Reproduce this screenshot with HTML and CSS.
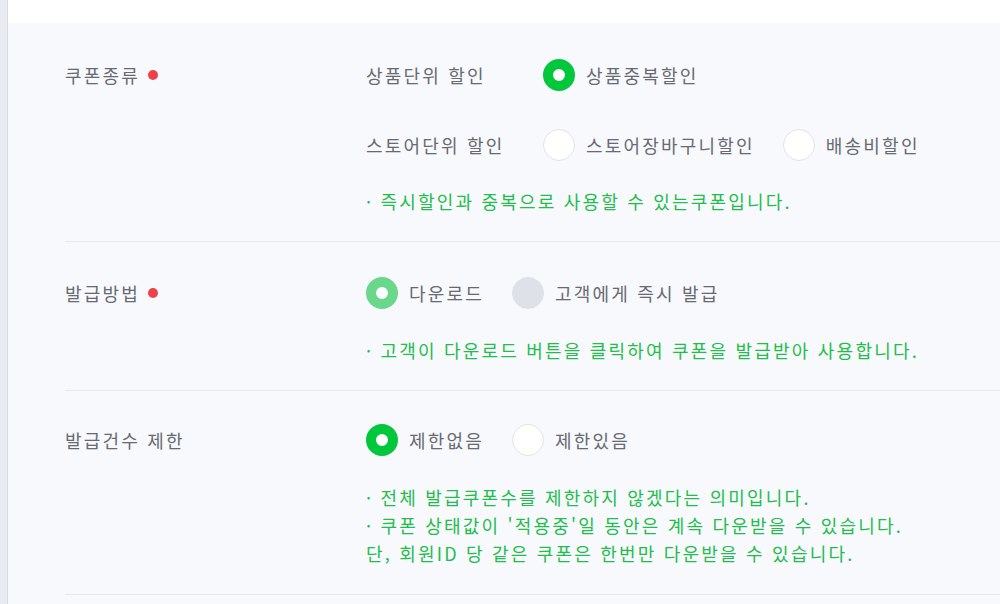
FILE: index.html
```html
<!DOCTYPE html>
<html lang="ko">
<head>
<meta charset="utf-8">
<link rel="stylesheet" href="styles.css">
</head>
<body>
<div class="app">
  <div class="edge"></div>
  <div class="main">
    <div class="topbar"></div>
    <div class="content">
      <div class="section s1">
        <div class="label">쿠폰종류<span class="req"></span></div>
        <div class="body">
          <div class="row">
            <span class="group">상품단위 할인</span>
            <label class="opt"><span class="radio on"></span><span class="txt">상품중복할인</span></label>
          </div>
          <div class="row row2">
            <span class="group">스토어단위 할인</span>
            <label class="opt"><span class="radio"></span><span class="txt">스토어장바구니할인</span></label>
            <label class="opt"><span class="radio"></span><span class="txt">배송비할인</span></label>
          </div>
          <p class="hint">· 즉시할인과 중복으로 사용할 수 있는쿠폰입니다.</p>
        </div>
      </div>
      <div class="section s2">
        <div class="label">발급방법<span class="req"></span></div>
        <div class="body">
          <div class="row">
            <label class="opt"><span class="radio on dis"></span><span class="txt">다운로드</span></label>
            <label class="opt"><span class="radio dis"></span><span class="txt">고객에게 즉시 발급</span></label>
          </div>
          <p class="hint">· 고객이 다운로드 버튼을 클릭하여 쿠폰을 발급받아 사용합니다.</p>
        </div>
      </div>
      <div class="section s3">
        <div class="label">발급건수 제한</div>
        <div class="body">
          <div class="row">
            <label class="opt"><span class="radio on"></span><span class="txt">제한없음</span></label>
            <label class="opt"><span class="radio"></span><span class="txt">제한있음</span></label>
          </div>
          <p class="hint">· 전체 발급쿠폰수를 제한하지 않겠다는 의미입니다.<br>· 쿠폰 상태값이 '적용중'일 동안은 계속 다운받을 수 있습니다.<br>단, 회원ID 당 같은 쿠폰은 한번만 다운받을 수 있습니다.</p>
        </div>
      </div>
    </div>
  </div>
</div>
</body>
</html>
```
FILE: styles.css
```css
* { box-sizing: border-box; }
html, body { margin: 0; padding: 0; }
body {
  background: #ffffff;
  font-family: "Noto Sans CJK KR", "Noto Sans", sans-serif;
  font-size: 18px;
  letter-spacing: 2.2px;
  color: #676a72;
  overflow: hidden;
}
.app { display: flex; height: 604px; }
.edge { width: 8px; background: #e9ebf2; border-right: 1px solid #d9dce4; }
.main { flex: 1; display: flex; flex-direction: column; }
.topbar { height: 23px; background: #ffffff; }
.content { flex: 1; background: #f8f9fc; padding-left: 57px; }
.section { display: flex; border-bottom: 1px solid #e7e9ee; }
.s1 { padding: 36px 0 26px; }
.s2 { padding: 35px 0 26px; }
.s3 { padding: 33px 0 27px; }
.label { width: 301px; height: 32px; display: flex; align-items: center; white-space: nowrap; }
.req { width: 10px; height: 10px; border-radius: 50%; background: #f0414b; margin-left: 8px; }
.body { flex: 1; }
.row { display: flex; align-items: center; height: 32px; white-space: nowrap; }
.row2 { margin-top: 38px; }
.group { width: 177px; }
.opt { display: flex; align-items: center; margin-right: 28px; }
.radio {
  width: 32px; height: 32px; border-radius: 50%; flex: none;
  background: #ffffff; border: 1px solid #e1e3e8; margin-right: 11px;
}
.radio.on { border: 10px solid #00c73c; }
.radio.dis { background: #dfe1e8; border-color: #dfe1e8; }
.radio.on.dis { background: #ffffff; border-color: #6ad88b; }
.s1 .hint { margin-top: 26px; }
.hint { margin: 27px 0 0; color: #22bd4d; line-height: 28px; white-space: nowrap; }
```
